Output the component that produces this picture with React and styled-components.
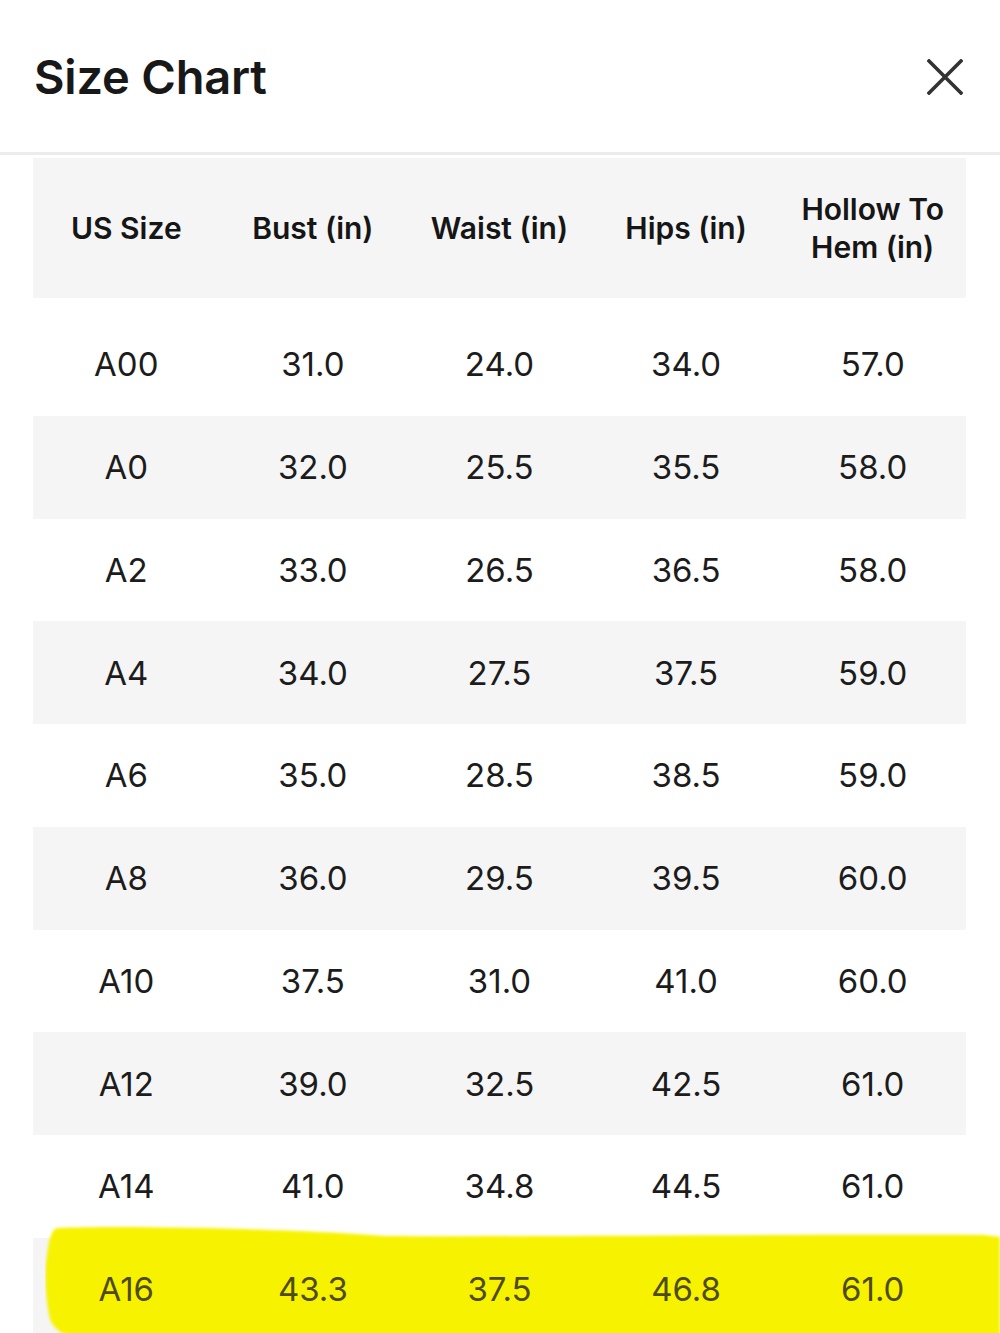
import styled, { createGlobalStyle } from 'styled-components'

const GlobalStyle = createGlobalStyle`
  html, body {
    margin: 0;
    padding: 0;
    overflow: hidden;
    background: #ffffff;
  }
  body {
    font-family: Inter, "Noto Sans", "Liberation Sans", sans-serif;
    color: #1c1c1c;
  }
`

const columns = ['US Size', 'Bust (in)', 'Waist (in)', 'Hips (in)', 'Hollow To Hem (in)']

const rows = [
  ['A00', '31.0', '24.0', '34.0', '57.0'],
  ['A0', '32.0', '25.5', '35.5', '58.0'],
  ['A2', '33.0', '26.5', '36.5', '58.0'],
  ['A4', '34.0', '27.5', '37.5', '59.0'],
  ['A6', '35.0', '28.5', '38.5', '59.0'],
  ['A8', '36.0', '29.5', '39.5', '60.0'],
  ['A10', '37.5', '31.0', '41.0', '60.0'],
  ['A12', '39.0', '32.5', '42.5', '61.0'],
  ['A14', '41.0', '34.8', '44.5', '61.0'],
  ['A16', '43.3', '37.5', '46.8', '61.0'],
]

const Page = styled.div`
  width: 1000px;
  height: 1333px;
  overflow: hidden;
`

const Header = styled.header`
  height: 152px;
  display: flex;
  align-items: center;
  justify-content: space-between;
  padding: 0 37px 2px 34px;
  box-sizing: border-box;
  border-bottom: 3px solid #ececec;
  margin-top: 3px;
`

const Title = styled.h1`
  margin: 0;
  font-size: 47px;
  font-weight: 600;
  letter-spacing: -0.2px;
  color: #181818;
`

const CloseButton = styled.button`
  border: none;
  background: none;
  padding: 0;
  width: 36px;
  height: 36px;
  display: flex;
  align-items: center;
  justify-content: center;
  cursor: pointer;
`

const Table = styled.div`
  margin: 3px 34px 0 33px;
`

const Grid = styled.div`
  position: relative;
  display: grid;
  grid-template-columns: repeat(5, 1fr);
  align-items: center;
  background: ${p => (p.$shaded ? '#f5f5f5' : '#ffffff')};
`

const HeadRow = styled(Grid)`
  height: 140px;
  margin-bottom: 15px;
`

const BodyRow = styled(Grid)`
  height: 102.75px;
`

const HeadCell = styled.div`
  text-align: center;
  font-size: 30px;
  font-weight: 600;
  line-height: 38px;
  color: #161616;
  padding: 0 10px;
`

const Cell = styled.div`
  position: relative;
  z-index: 1;
  text-align: center;
  font-size: 33px;
  font-weight: 400;
  color: ${p => (p.$marked ? '#4f4b16' : '#1c1c1c')};
`

const Highlight = styled.svg`
  position: absolute;
  left: 12px;
  top: -13px;
  height: 118px;
  width: calc(100% + 22px);
  z-index: 0;
  pointer-events: none;
`

function CloseIcon() {
  return (
    <svg width="36" height="36" viewBox="0 0 36 36">
      <path d="M2 2 L34 34 M34 2 L2 34" stroke="#333333" strokeWidth="3.6" strokeLinecap="square" fill="none" />
    </svg>
  )
}

function Marker() {
  return (
    <Highlight viewBox="0 0 955 118" preserveAspectRatio="none">
      <defs>
        <filter id="soft" x="-5%" y="-20%" width="110%" height="140%">
          <feGaussianBlur stdDeviation="1.6" />
        </filter>
      </defs>
      <path
        filter="url(#soft)"
        fill="#f7f300"
        d="M12 3 C80 0 250 4 340 11 C500 12 700 9 940 10 L955 12 L955 118 L40 118 C20 112 8 104 5 94 C0 72 -1 46 2 30 C4 15 6 5 12 3 Z"
      />
    </Highlight>
  )
}

export default function App() {
  return (
    <Page>
      <GlobalStyle />
      <Header>
        <Title>Size Chart</Title>
        <CloseButton aria-label="Close">
          <CloseIcon />
        </CloseButton>
      </Header>
      <Table>
        <HeadRow $shaded>
          {columns.map(c => (
            <HeadCell key={c}>{c}</HeadCell>
          ))}
        </HeadRow>
        {rows.map((r, i) => {
          const marked = i === rows.length - 1
          return (
            <BodyRow key={r[0]} $shaded={i % 2 === 1}>
              {r.map((v, j) => (
                <Cell key={j} $marked={marked}>{v}</Cell>
              ))}
              {marked && <Marker />}
            </BodyRow>
          )
        })}
      </Table>
    </Page>
  )
}
